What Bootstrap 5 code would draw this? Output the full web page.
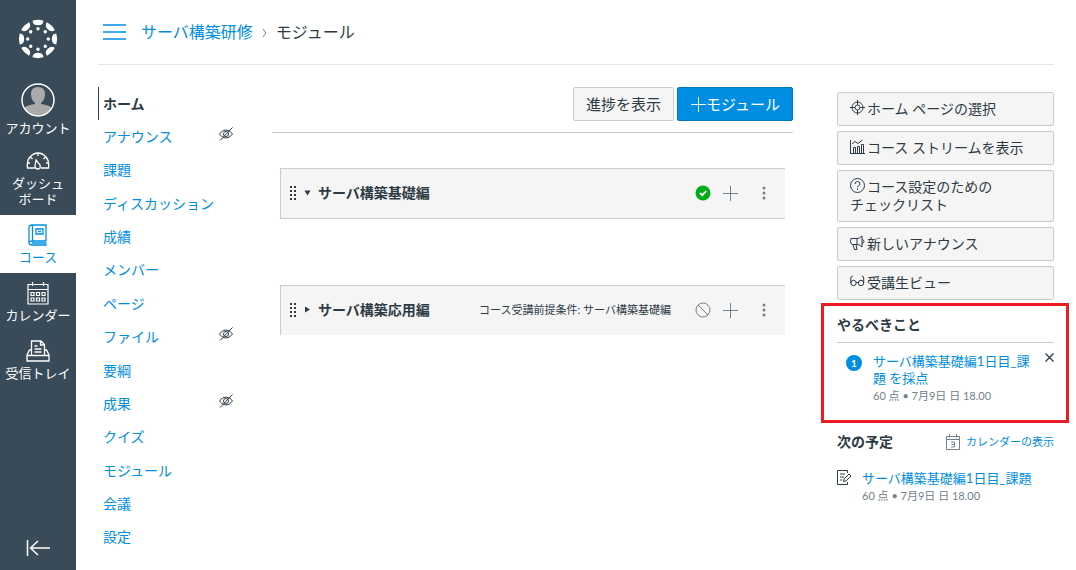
<!DOCTYPE html>
<html lang="ja">
<head>
<meta charset="utf-8">
<meta name="viewport" content="width=device-width, initial-scale=1">
<title>サーバ構築研修</title>
<link href="https://cdn.jsdelivr.net/npm/bootstrap@5.3.0/dist/css/bootstrap.min.css" rel="stylesheet">
<style>
  :root { --ink: #2d3b45; --brand: #008ee2; --rail: #394b58; --line: #c7cdd1; --muted: #73818c; }
  body { font-family: Lato, "Noto Sans CJK JP", sans-serif; font-size: 14px; line-height: 18px; color: var(--ink); background: #fff; }
  a { color: var(--brand); text-decoration: none; }
  a:hover { text-decoration: underline; }
  svg { display: block; fill: none; stroke: currentColor; flex: none; }
  h2 { font-size: 14px; line-height: 18px; font-weight: 700; margin: 0; }
  .solid { fill: currentColor; stroke: none; }
  .soft { color: var(--muted); }
  .plain { border: 0; background: none; padding: 0; color: inherit; }

  .rail { width: 76px; background: var(--rail); color: #fff; }
  .rail a { color: #fff; font-size: 13px; line-height: 16px; padding: 8px 0; gap: 2px; text-align: center; }
  .rail .brand-mark { padding: 19px 0 24px; }
  .rail .account { padding: 0 0 5px; gap: 3px; }
  .rail .current { background: #fff; color: var(--brand); }
  .icon-box { height: 24px; }
  .collapse-btn { margin-bottom: 12px; }

  .page { padding: 0 22px; }
  .topbar { height: 65px; border-bottom: 1px solid #e3e6e8; font-size: 16px; line-height: 20px; padding-left: 5px; }
  .menu-btn { color: var(--brand); margin-right: 15px; }
  .crumb-sep { margin: 2px 9px 0; }
  .course-nav { width: 174px; padding: 22px 0 16px; }
  .course-nav li { flex: 1 0 auto; }
  .course-nav a { padding-left: 5px; min-height: 32px; }
  .course-nav .here { color: var(--ink); font-weight: 700; border-left: 1px solid var(--ink); padding-left: 4px; }
  .course-nav svg { margin-right: 38px; margin-bottom: 6px; }

  .content-area { padding-top: 22px; min-width: 0; }
  .actions { padding-bottom: 11px; border-bottom: 1px solid var(--line); gap: 3px; }
  .act { font-size: 14px; line-height: 18px; padding: 7px 12px; border-radius: 2px; border: 1px solid var(--line); background: #f5f5f5; color: var(--ink); text-align: left; }
  .actions .act { font-size: 15px; }
  .act-main { background: var(--brand); border-color: #0079c1; color: #fff; }
  .modules { padding: 35px 8px 0; gap: 66px; }
  .module { height: 51px; background: #f5f5f5; border: 1px solid var(--line); border-right: 0; padding: 0 11px 2px 8px; }
  .module.closed { height: 50px; border-bottom: 0; }
  .module h2 { margin-left: 7px; }
  .toggle { margin-left: 7px; }
  .prereq { font-size: 11px; }
  .tools { gap: 11px; }
  .tools .more { margin-left: 5px; }

  .side { width: 217px; margin-left: 44px; padding-top: 27px; }
  .shortcuts { gap: 5px; }
  .lead-icon { display: inline-block; vertical-align: -1px; margin-right: 2px; }
  .todo { margin: 3px -15px 0 -16px; border: 3px solid #ed1c24; padding: 10px 12px 16px 13px; }
  .todo h2 { padding-bottom: 8px; border-bottom: 1px solid var(--line); }
  .todo-item { padding: 10px 0 0 9px; gap: 11px; }
  .count { width: 16px; height: 16px; margin-top: 2px; border-radius: 50%; background: var(--brand); color: #fff; font-size: 10px; line-height: 16px; font-weight: 700; text-align: center; flex: none; }
  .item-link { font-size: 13px; line-height: 17px; }
  .meta { font-size: 11px; line-height: 17px; color: var(--muted); }
  .small-link { font-size: 11px; gap: 6px; }
  .upcoming { padding-top: 10px; }
  .event { padding-top: 19px; gap: 10px; }
</style>
</head>
<body>
<svg width="0" height="0" class="position-absolute" aria-hidden="true">
  <symbol id="hidden-eye" viewBox="0 0 16 16"><path d="M1.500 8Q4 4 8 4t6.500 4q-2.500 4-6.500 4T1.500 8z"/><circle cx="8" cy="8" r="2.500"/><path d="M2 14.500L14.500 1.500"/></symbol>
  <symbol id="plus" viewBox="0 0 16 16"><path d="M8.500 1v15M1 8.500h15"/></symbol>
  <symbol id="more" viewBox="0 0 4 14"><g fill="currentColor" stroke="none"><circle cx="2" cy="2" r="1.500"/><circle cx="2" cy="7" r="1.500"/><circle cx="2" cy="12" r="1.500"/></g></symbol>
  <symbol id="grip" viewBox="0 0 8 16"><path class="solid" d="M1 1h2v2H1zM5 1h2v2H5zM1 5h2v2H1zM5 5h2v2H5zM1 9h2v2H1zM5 9h2v2H5zM1 13h2v2H1zM5 13h2v2H5z"/></symbol>
</svg>
<div class="d-flex min-vh-100">
  <nav class="rail d-flex flex-column flex-shrink-0" aria-label="グローバルナビゲーション">
    <a href="#" class="brand-mark d-flex justify-content-center" aria-label="Canvas">
      <svg class="solid" width="40" height="40" viewBox="-20 -20 40 40">
        <defs><g id="seg"><path d="M-5.500-18.300A19 19 0 0 1 5.500-18.300Q5.200-13.800 0-13.800T-5.500-18.300z"/><circle cy="-10.300" r="1.700"/></g></defs>
        <use href="#seg"/><use href="#seg" transform="rotate(45)"/><use href="#seg" transform="rotate(90)"/><use href="#seg" transform="rotate(135)"/><use href="#seg" transform="rotate(180)"/><use href="#seg" transform="rotate(225)"/><use href="#seg" transform="rotate(270)"/><use href="#seg" transform="rotate(315)"/>
      </svg>
    </a>
    <a href="#" class="account d-flex flex-column align-items-center">
      <svg width="34" height="34" viewBox="0 0 34 34"><defs><clipPath id="face"><circle cx="17" cy="17" r="15.500"/></clipPath></defs><g clip-path="url(#face)" fill="#aaa" stroke="none"><path d="M10 11q0-7 7-7t7 7q0 6-4 9v1q8 1 13 5v8H1v-8q5-4 13-5v-1q-4-3-4-9z"/></g><circle cx="17" cy="17" r="16" stroke-width="1.500"/></svg>
      <span>アカウント</span>
    </a>
    <a href="#" class="d-flex flex-column align-items-center">
      <span class="icon-box d-flex align-items-center"><svg width="24" height="18" viewBox="0 0 24 18" stroke-width="1.300"><path d="M9 16H1.500Q.5 9 4 5q3.500-4 8-4t8 4q3.500 4 2.500 11H15"/><path d="M12 1v3M4.500 5l2 2M19.500 5l-2 2M1 11h3M20 11h3M10 8l4 5q1 4-2 4t-3-3z"/></svg></span>
      <span>ダッシュ<br>ボード</span>
    </a>
    <a href="#" class="current d-flex flex-column align-items-center" aria-current="page">
      <span class="icon-box d-flex align-items-center"><svg width="20" height="22" viewBox="0 0 20 22" stroke-width="1.300"><path d="M18 17V1H4Q1 1 1 4v14q0 3 3 3h14v-1M18 17H4q-3 0-3 2.500M4.500 1v16M4 19h14.500M8 5h7v5H8zM10 7.500h3"/></svg></span>
      <span>コース</span>
    </a>
    <a href="#" class="d-flex flex-column align-items-center">
      <span class="icon-box d-flex align-items-center"><svg width="22" height="24" viewBox="0 0 22 24" stroke-width="1.200"><path d="M1 3.500h20V23H1zM1 8.500h20M5.500 1v4M16.500 1v4M4 11.500h3v3H4zM9.500 11.500h3v3h-3zM15 11.500h3v3h-3zM4 17h3v3H4zM9.500 17h3v3h-3zM15 17h3v3h-3z"/></svg></span>
      <span>カレンダー</span>
    </a>
    <a href="#" class="d-flex flex-column align-items-center">
      <span class="icon-box d-flex align-items-center"><svg width="24" height="22" viewBox="0 0 24 22" stroke-width="1.300"><path d="M5.500 15V1H15l3.500 3.500V15M14.500 1v4h4M8.500 6h3M8.500 9h7M8.500 12h7M5.500 10H3.500L1 15v6h22v-6l-2.500-5h-2M1 15.500h22"/></svg></span>
      <span>受信トレイ</span>
    </a>
    <button type="button" class="plain collapse-btn d-flex justify-content-center mt-auto" aria-label="ナビゲーションを縮小"><svg width="24" height="20" viewBox="0 0 24 20" stroke-width="1.500"><path d="M1.500 2v16M24 10H5M12 3l-7.500 7 7.500 7"/></svg></button>
  </nav>

  <div class="page d-flex flex-column flex-grow-1">
    <header class="topbar d-flex align-items-center">
      <button type="button" class="plain menu-btn" aria-label="コースナビゲーションメニュー"><svg width="23" height="16" viewBox="0 0 23 16" stroke-width="1.500"><path d="M0 1h23M0 8h23M0 15h23"/></svg></button>
      <a href="#">サーバ構築研修</a>
      <svg class="crumb-sep soft" width="5" height="10" viewBox="0 0 5 10"><path d="M1 1l3 4-3 4"/></svg>
      <span>モジュール</span>
    </header>

    <div class="d-flex flex-grow-1">
      <nav class="course-nav d-flex flex-shrink-0" aria-label="コース">
        <ul class="list-unstyled d-flex flex-column flex-grow-1 mb-0">
          <li class="d-flex"><a href="#" class="here d-flex align-items-center flex-grow-1">ホーム</a></li>
          <li class="d-flex"><a href="#" class="d-flex align-items-center flex-grow-1">アナウンス</a><svg class="align-self-center" width="16" height="16"><use href="#hidden-eye"/></svg></li>
          <li class="d-flex"><a href="#" class="d-flex align-items-center">課題</a></li>
          <li class="d-flex"><a href="#" class="d-flex align-items-center">ディスカッション</a></li>
          <li class="d-flex"><a href="#" class="d-flex align-items-center">成績</a></li>
          <li class="d-flex"><a href="#" class="d-flex align-items-center">メンバー</a></li>
          <li class="d-flex"><a href="#" class="d-flex align-items-center">ページ</a></li>
          <li class="d-flex"><a href="#" class="d-flex align-items-center flex-grow-1">ファイル</a><svg class="align-self-center" width="16" height="16"><use href="#hidden-eye"/></svg></li>
          <li class="d-flex"><a href="#" class="d-flex align-items-center">要綱</a></li>
          <li class="d-flex"><a href="#" class="d-flex align-items-center flex-grow-1">成果</a><svg class="align-self-center" width="16" height="16"><use href="#hidden-eye"/></svg></li>
          <li class="d-flex"><a href="#" class="d-flex align-items-center">クイズ</a></li>
          <li class="d-flex"><a href="#" class="d-flex align-items-center">モジュール</a></li>
          <li class="d-flex"><a href="#" class="d-flex align-items-center">会議</a></li>
          <li class="d-flex"><a href="#" class="d-flex align-items-center">設定</a></li>
        </ul>
      </nav>

      <main class="content-area flex-grow-1">
        <div class="actions d-flex justify-content-end">
          <button type="button" class="act">進捗を表示</button>
          <button type="button" class="act act-main d-flex align-items-center"><svg width="16" height="16"><use href="#plus"/></svg>モジュール</button>
        </div>
        <div class="modules d-flex flex-column">
          <section class="module d-flex align-items-center">
            <svg width="8" height="16"><use href="#grip"/></svg>
            <button type="button" class="plain toggle" aria-expanded="true" aria-label="折りたたむ"><svg class="solid" width="7" height="7" viewBox="0 0 7 7"><path d="M.5 1.500h6L3.500 6.500z"/></svg></button>
            <h2>サーバ構築基礎編</h2>
            <div class="tools soft d-flex align-items-center ms-auto">
              <svg width="16" height="16" viewBox="0 0 16 16" role="img" aria-label="公開済み"><circle cx="8" cy="8" r="7.500" fill="#00ac18" stroke="none"/><path d="M5 8l2.200 2.200L11.200 6" stroke="#fff" stroke-width="1.800"/></svg>
              <button type="button" class="plain" aria-label="追加"><svg width="16" height="16"><use href="#plus"/></svg></button>
              <button type="button" class="plain more px-2" aria-label="管理"><svg width="4" height="14"><use href="#more"/></svg></button>
            </div>
          </section>
          <section class="module closed d-flex align-items-center">
            <svg width="8" height="16"><use href="#grip"/></svg>
            <button type="button" class="plain toggle" aria-expanded="false" aria-label="展開する"><svg class="solid" width="7" height="7" viewBox="0 0 7 7"><path d="M1 .5l5 3-5 3z"/></svg></button>
            <h2>サーバ構築応用編</h2>
            <span class="prereq ms-auto me-4">コース受講前提条件: サーバ構築基礎編</span>
            <div class="tools soft d-flex align-items-center">
              <svg width="16" height="16" viewBox="0 0 16 16" role="img" aria-label="未公開"><circle cx="8" cy="8" r="7"/><path d="M3 3l10 10"/></svg>
              <button type="button" class="plain" aria-label="追加"><svg width="16" height="16"><use href="#plus"/></svg></button>
              <button type="button" class="plain more px-2" aria-label="管理"><svg width="4" height="14"><use href="#more"/></svg></button>
            </div>
          </section>
        </div>
      </main>

      <aside class="side flex-shrink-0">
        <div class="shortcuts d-flex flex-column">
          <button type="button" class="act"><svg class="lead-icon" width="15" height="15" viewBox="0 0 15 15"><circle cx="7.500" cy="7.500" r="5.500"/><circle cx="7.500" cy="7.500" r="2.500"/><path d="M7.500 0v5M7.500 10v5M0 7.500h5M10 7.500h5"/></svg>ホーム ページの選択</button>
          <button type="button" class="act"><svg class="lead-icon" width="15" height="15" viewBox="0 0 15 15"><path d="M.5 1v13.500H15M3.500 14V8.500h2V14M7.500 14V7.500h2V14M11.500 14V5.500h2V14M2 5l3-2.500 3 2L12.500 1"/></svg>コース ストリームを表示</button>
          <button type="button" class="act"><svg class="lead-icon" width="15" height="15" viewBox="0 0 15 15"><circle cx="7.500" cy="7.500" r="7"/><path d="M5 6q0-2.500 2.500-2.500T10 6q0 1-1.200 1.600T7.500 9.500M7.500 10.500v1.500"/></svg>コース設定のための<br>チェックリスト</button>
          <button type="button" class="act"><svg class="lead-icon" width="15" height="15" viewBox="0 0 15 15"><path d="M1 3.500h6q3 0 5-2.500v11q-2-2.500-5-2.500H2Q.5 8 .5 6.500T1 3.500zM7 3.500v6M3 9.500l1.500 5H7L6 9.500M12 4.500q2 .5 2 2t-2 2"/></svg>新しいアナウンス</button>
          <button type="button" class="act"><svg class="lead-icon" width="15" height="15" viewBox="0 0 15 15"><circle cx="3.500" cy="9" r="2.700"/><circle cx="11" cy="9" r="2.700"/><path d="M.8 9V4q0-2 2-2M13.700 9V4q0-2-2-2M6.200 8.500h2"/></svg>受講生ビュー</button>
        </div>

        <section class="todo">
          <h2>やるべきこと</h2>
          <div class="todo-item d-flex align-items-start">
            <span class="count">1</span>
            <div class="flex-grow-1">
              <a href="#" class="item-link d-block">サーバ構築基礎編1日目_課<br>題 を採点</a>
              <div class="meta">60 点 • 7月9日 日 18.00</div>
            </div>
            <button type="button" class="plain soft" aria-label="無視"><svg width="9" height="9" viewBox="0 0 9 9" stroke-width="1.300"><path d="M.5.5l8 8M8.500.5l-8 8"/></svg></button>
          </div>
        </section>

        <section class="upcoming">
          <div class="d-flex align-items-center justify-content-between">
            <h2>次の予定</h2>
            <a href="#" class="small-link d-flex align-items-center"><svg class="soft" width="14" height="16" viewBox="0 0 14 16"><path d="M.5 2.500h13v13H.5zM.5 5.500h13M3.500 0v3.500M10.500 0v3.500M5 8h3.500v5H5M5.500 10.500h3"/></svg>カレンダーの表示</a>
          </div>
          <div class="event d-flex">
            <svg width="15" height="15" viewBox="0 0 15 15"><path d="M10.500 3V.5H.5v14h10V12M3 4h5M3 7h4M3 10h2M7 9l5-5 2 2-5 5-2.500.5z"/></svg>
            <div>
              <a href="#" class="item-link d-block">サーバ構築基礎編1日目_課題</a>
              <div class="meta">60 点 • 7月9日 日 18.00</div>
            </div>
          </div>
        </section>
      </aside>
    </div>
  </div>
</div>
<script src="https://cdn.jsdelivr.net/npm/bootstrap@5.3.0/dist/js/bootstrap.bundle.min.js"></script>
</body>
</html>
